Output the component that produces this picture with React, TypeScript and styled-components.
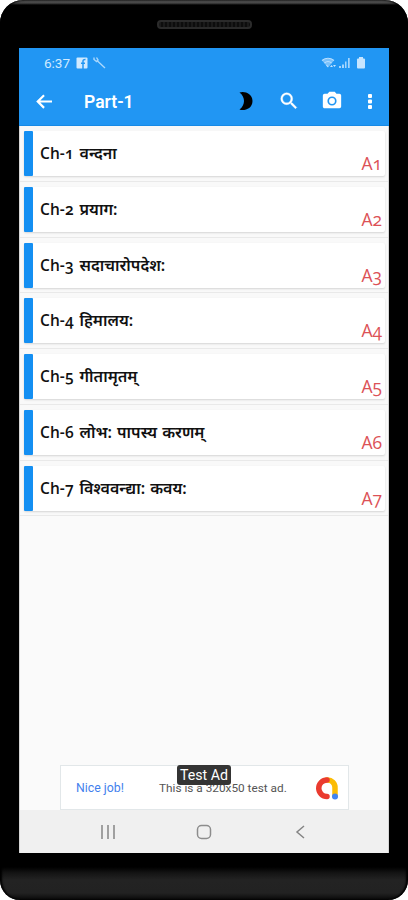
import React from "react";
import styled, { createGlobalStyle } from "styled-components";

const Global = createGlobalStyle`
  body { margin: 0; background: #fff; }
  * { box-sizing: border-box; }
`;

const Phone = styled.main`
  width: 408px;
  height: 900px;
  padding: 0 19px;
  display: flex;
  flex-direction: column;
  border-radius: 23px 23px 20px 20px;
  overflow: hidden;
  background: linear-gradient(#555 0, #454545 3px, #000 5px, #000 867px, #141414 873px, #232323 880px, #222 893px, #080808 900px);
  box-shadow: inset 2px 0 2px #000, inset -2px 0 2px #000;
  font-family: Roboto, "Noto Sans", sans-serif;
`;

const Forehead = styled.div`
  height: 48px;
  flex: none;
  display: flex;
  justify-content: center;
  padding-top: 20px;
`;

const Speaker = styled.div`
  width: 95px;
  height: 9px;
  border: 2px solid #2b2b2b;
  border-radius: 4px;
  background: repeating-linear-gradient(90deg, #1a1a1a 0 2px, #0d0d0d 2px 4px);
`;

const Screen = styled.section`
  height: 805px;
  flex: none;
  display: flex;
  flex-direction: column;
  background: #fafafa;
  border-right: 1px solid #d5d5d5;
  border-left: 1px solid #d5d5d5;
`;

const Header = styled.header`
  height: 78px;
  flex: none;
  margin: 0 -1px;
  background: #2196f3;
  border-bottom: 1px solid #178ae6;
`;

const StatusBar = styled.div`
  height: 29px;
  padding: 0 23px 0 25px;
  display: flex;
  align-items: center;
  color: #d0eaff;
  font-size: 13.5px;
  svg { flex: none; }
`;

const Clock = styled.span`
  width: 32px;
`;

const ToolIcon = styled.svg`
  margin-left: 4px;
`;

const Spacer = styled.span`
  flex: 1;
`;

const Toolbar = styled.div`
  height: 48px;
  display: flex;
  align-items: center;
  padding: 0 7px 0 16px;
  color: #fff;
  svg { flex: none; display: block; }
`;

const Title = styled.h1`
  margin: 1px 0 0 30px;
  flex: 1;
  font-size: 17.5px;
  font-weight: 600;
`;

const Actions = styled.div`
  display: grid;
  grid-template-columns: 43px 43px 43px 33px;
  align-items: center;
  justify-items: center;
  margin-right: -4px;
`;

const List = styled.div`
  flex: none;
`;

const Row = styled.div`
  height: 55.75px;
  padding: 5px 3px 5.5px 4px;
  border-bottom: 1px solid #e9e9e9;
  background: #f9f9f9;
`;

const Card = styled.article`
  height: 45px;
  display: flex;
  background: #fff;
  border-radius: 2px;
  box-shadow: 0 1px 2px #d4d4d4;
`;

const Marker = styled.div`
  width: 9px;
  flex: none;
  background: #148ff2;
  border-radius: 1px;
`;

const Chapter = styled.div`
  flex: 1;
  display: flex;
  align-items: center;
  padding: 0 0 1px 7px;
  color: #111;
  white-space: nowrap;
`;

const Num = styled.span`
  width: 39.5px;
  font: 600 15.5px/20px "Open Sans", sans-serif;
  font-feature-settings: "onum";
  letter-spacing: 0.1px;
`;

const Name = styled.span`
  font: 600 16px/20px "Noto Sans", "Noto Sans Devanagari", sans-serif;
  word-spacing: 1px;
`;

const Answer = styled.span`
  align-self: flex-end;
  padding: 0 3px 1px 0;
  font: 400 17.5px/24px "Open Sans", sans-serif;
  font-feature-settings: "onum";
  color: #dc5257;
`;

const Empty = styled.div`
  flex: 1;
`;

const Ad = styled.aside`
  position: relative;
  width: 289px;
  height: 45px;
  margin-left: 40px;
  flex: none;
  display: flex;
  align-items: center;
  padding: 0 9px 0 15px;
  background: #fff;
  border: 1px solid #e2e7e9;
  font-size: 11.8px;
  color: #555;
  white-space: nowrap;
`;

const Praise = styled.span`
  width: 83px;
  font-size: 12.3px;
  color: #427fed;
`;

const AdText = styled.span`
  flex: 1;
`;

const AdLabel = styled.div`
  position: absolute;
  left: 116px;
  top: -1px;
  width: 54px;
  height: 20px;
  border-radius: 3px;
  background: #343434;
  color: #fff;
  font-size: 14.2px;
  line-height: 21px;
  text-align: center;
`;

const NavBar = styled.nav`
  height: 43px;
  flex: none;
  display: grid;
  grid-template-columns: 96px 96px 96px;
  justify-content: center;
  align-items: center;
  justify-items: center;
  background: #f0f0f0;
`;

const chapters = [
  "वन्दना",
  "प्रयाग:",
  "सदाचारोपदेश:",
  "हिमालय:",
  "गीतामृतम्",
  "लोभ: पापस्य करणम्",
  "विश्ववन्द्या: कवय:",
];

export default function App() {
  return (
    <>
      <Global />
      <Phone>
        <Forehead><Speaker /></Forehead>
        <Screen>
          <Header>
            <StatusBar>
              <Clock>6:37</Clock>
              <svg width="12" height="12" viewBox="0 0 12 12">
                <rect x=".5" y=".5" width="11" height="11" rx="1" fill="#d0eaff" />
                <path d="M7 12V4q0-1.700 2.500-1.500M5 6.300h4" fill="none" stroke="#2196f3" strokeWidth="1.500" />
              </svg>
              <ToolIcon width="14" height="13" viewBox="0 0 14 13">
                <path d="M5.500 5 13 12M2 1.500v2l2.500 2 1.500-1.500L4.500 1.500" fill="none" stroke="#a9d7fc" strokeWidth="1.400" />
              </ToolIcon>
              <Spacer />
              <svg width="45" height="14" viewBox="0 0 45 14" fill="#c6e5ff">
                <path d="M1 4.500Q7 .5 13 4.500L7 11.500Z" opacity=".55" />
                <path d="M1 4.500Q7 0 13 4.500M3.500 7Q7 4 10.500 7M5.500 9L7 11" fill="none" stroke="#b9dfff" strokeWidth="1.200" />
                <path d="M9 11l1.500-2 1.500 2zM12 9h3l-1.500 2z" />
                <path d="M18 12v-2h2v2zM21 12V8.500h2V12zM24 12V5.500h1.500V12zM27 12V2h1.700v10z" opacity=".8" />
                <rect x="36" y="2.500" width="8" height="10" rx="1" /><rect x="38" y="1" width="4" height="2" />
              </svg>
            </StatusBar>
            <Toolbar>
              <svg width="19" height="19" viewBox="0 0 24 24" fill="#fff"><path d="M21.500 10.700H6.700l5.700-5.700L10.500 3 1.500 12l9 9 1.900-2-5.700-5.700h14.800z" /></svg>
              <Title>Part-1</Title>
              <Actions>
                <svg width="14" height="20" viewBox="0 0 14 20"><path d="M.5 1.500C5-.2 13.500 2 13.500 10S5 20.200.5 18.500C6.500 14 6.500 6 .5 1.500Z" fill="#000" /></svg>
                <svg width="22" height="22" viewBox="0 0 24 24" fill="#fff" stroke="#fff" strokeWidth=".4"><path d="M15.500 14h-.79l-.28-.27A6.470 6.470 0 0 0 16 9.500 6.500 6.500 0 1 0 9.500 16c1.610 0 3.090-.59 4.230-1.570l.27.28v.79l5 4.990L20.490 19zM9.500 14A4.500 4.500 0 1 1 9.500 5a4.500 4.500 0 0 1 0 9z" /></svg>
                <svg width="22" height="22" viewBox="0 0 24 24" fill="#fff"><circle cx="12" cy="12" r="3.200" /><path fillRule="evenodd" d="M9 2 7.170 4H4a2 2 0 0 0-2 2v12c0 1.100.9 2 2 2h16a2 2 0 0 0 2-2V6a2 2 0 0 0-2-2h-3.170L15 2zm3 15a5 5 0 1 1 0-10 5 5 0 0 1 0 10z" /></svg>
                <svg width="6" height="18" viewBox="0 0 6 18" fill="#fff"><rect x="1" y="2" width="4" height="4" rx="1" /><rect x="1" y="7.500" width="4" height="4" rx="1" /><rect x="1" y="13" width="4" height="4" rx="1" /></svg>
              </Actions>
            </Toolbar>
          </Header>
          <List>
            {chapters.map((name, i) => (
              <Row key={name}>
                <Card>
                  <Marker />
                  <Chapter><Num>Ch-{i + 1}</Num><Name>{name}</Name></Chapter>
                  <Answer>A{i + 1}</Answer>
                </Card>
              </Row>
            ))}
          </List>
          <Empty />
          <Ad>
            <Praise>Nice job!</Praise>
            <AdText>This is a 320x50 test ad.</AdText>
            <svg width="24" height="24" viewBox="0 0 24 24" fill="none" strokeWidth="5.500" strokeLinecap="round">
              <path d="M12 4A7.500 7.500 0 0 1 20 12V20" stroke="#fbbc04" />
              <path d="M12 20.500A8 8 0 1 1 12 4" stroke="#ea3b2f" />
              <circle cx="20" cy="20.500" r="3" fill="#4285f4" />
            </svg>
            <AdLabel>Test Ad</AdLabel>
          </Ad>
          <NavBar>
            <svg width="16" height="14" viewBox="0 0 16 14" stroke="#929292" strokeWidth="1.700"><path d="M2 0v14M8 0v14M14 0v14" /></svg>
            <svg width="16" height="16" viewBox="0 0 16 16"><rect x="1.500" y="1.500" width="13" height="13" rx="4" fill="none" stroke="#8d8d8d" strokeWidth="1.500" /></svg>
            <svg width="10" height="14" viewBox="0 0 10 14"><path d="M9 1 2 7l7 6" fill="none" stroke="#858585" strokeWidth="1.500" /></svg>
          </NavBar>
        </Screen>
      </Phone>
    </>
  );
}
